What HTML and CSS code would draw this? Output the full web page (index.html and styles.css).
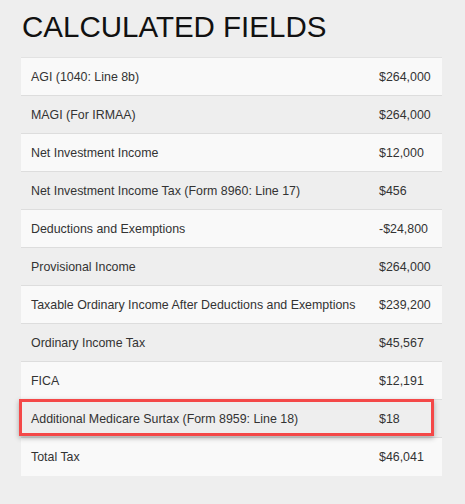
FILE: index.html
```html
<!DOCTYPE html>
<html>
<head>
<meta charset="utf-8">
<link rel="stylesheet" href="styles.css">
</head>
<body>
<div class="page">
  <h1 class="title">CALCULATED FIELDS</h1>
  <div class="table-wrap">
    <table class="fields">
      <tbody>
        <tr><td class="label">AGI (1040: Line 8b)</td><td class="value">$264,000</td></tr>
        <tr><td class="label">MAGI (For IRMAA)</td><td class="value">$264,000</td></tr>
        <tr><td class="label">Net Investment Income</td><td class="value">$12,000</td></tr>
        <tr><td class="label">Net Investment Income Tax (Form 8960: Line 17)</td><td class="value">$456</td></tr>
        <tr><td class="label">Deductions and Exemptions</td><td class="value">-$24,800</td></tr>
        <tr><td class="label">Provisional Income</td><td class="value">$264,000</td></tr>
        <tr><td class="label">Taxable Ordinary Income After Deductions and Exemptions</td><td class="value">$239,200</td></tr>
        <tr><td class="label">Ordinary Income Tax</td><td class="value">$45,567</td></tr>
        <tr><td class="label">FICA</td><td class="value">$12,191</td></tr>
        <tr><td class="label">Additional Medicare Surtax (Form 8959: Line 18)</td><td class="value">$18</td></tr>
        <tr><td class="label">Total Tax</td><td class="value">$46,041</td></tr>
      </tbody>
    </table>
    <div class="highlight"></div>
  </div>
</div>
</body>
</html>
```

FILE: styles.css
```css
html, body {
  margin: 0;
  padding: 0;
  background: #eeeeee;
}
body {
  font-family: "Liberation Sans", Arial, sans-serif;
  color: #333333;
}
.page {
  padding: 0 23px 0 21px;
}
.title {
  margin: 0;
  padding: 10px 0 0 1px;
  height: 57px;
  box-sizing: border-box;
  font-size: 29.5px;
  font-weight: normal;
  line-height: 34px;
  color: #111111;
}
.table-wrap {
  position: relative;
  width: 421px;
}
.fields {
  width: 421px;
  table-layout: fixed;
  border-collapse: collapse;
  font-size: 12.4px;
}
.fields td {
  height: 38px;
  padding: 0 10px;
  border-top: 1px solid #dddddd;
  vertical-align: middle;
  box-sizing: border-box;
  white-space: nowrap;
}
.fields tr:nth-child(odd) td {
  background: #f9f9f9;
}
.fields tr:first-child td {
  border-top: 1px solid #e2e2e2;
}
.fields .label {
  width: 358px;
}
.fields .value {
  width: 63px;
  padding-left: 0;
}
.highlight {
  position: absolute;
  left: -2px;
  top: 342px;
  width: 409px;
  height: 31px;
  border: 3px solid #f44848;
  box-shadow: 0 2px 5px rgba(0, 0, 0, 0.3);
  pointer-events: none;
}
```
